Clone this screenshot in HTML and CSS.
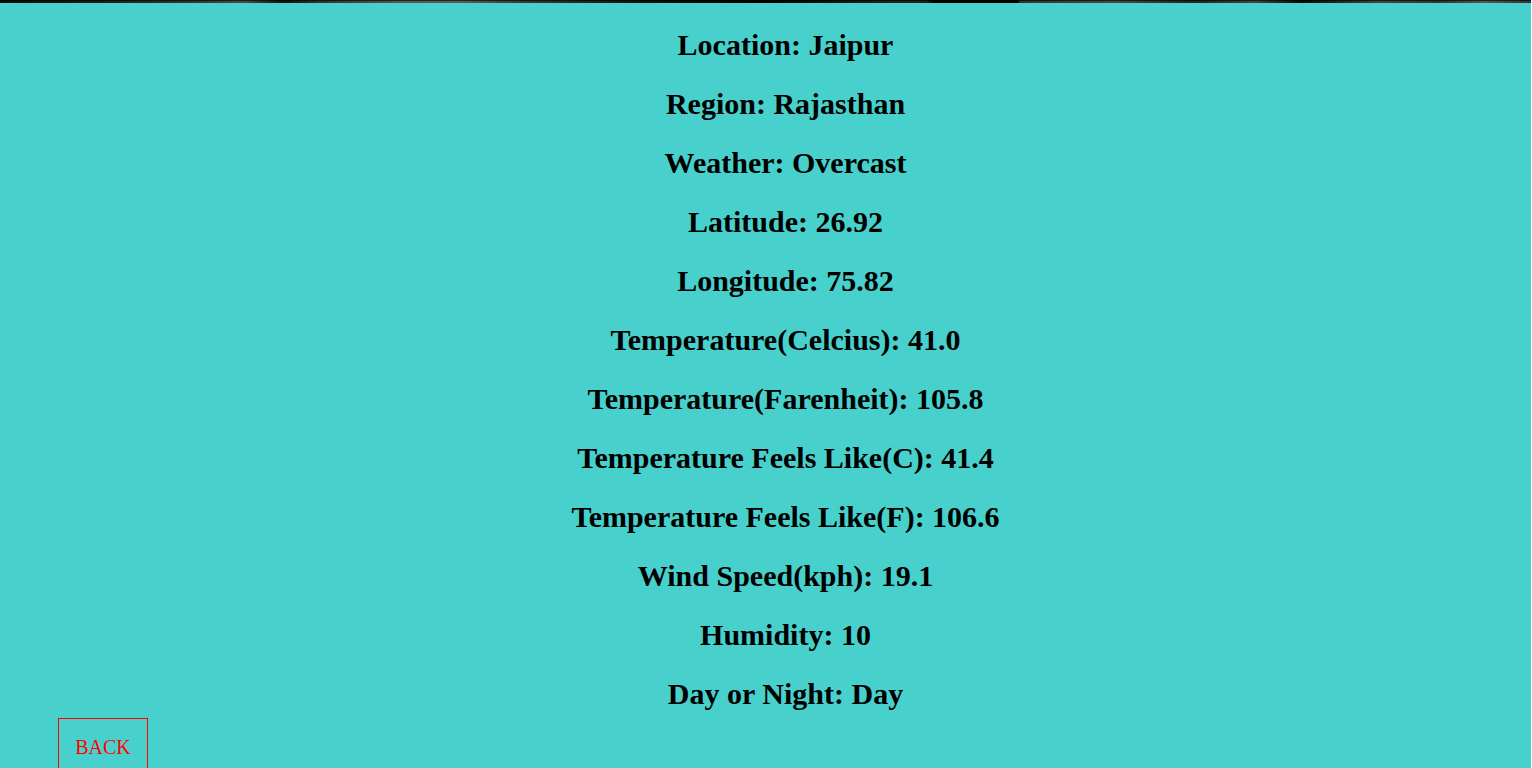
FILE: index.html
```html
<!DOCTYPE html>
<html lang="en">
<head>
<meta charset="utf-8">
<title>Weather</title>
<link rel="stylesheet" href="styles.css">
</head>
<body>
<div class="banner"></div>
<main class="report">
<h1 class="line">Location: Jaipur</h1>
<h1 class="line">Region: Rajasthan</h1>
<h1 class="line">Weather: Overcast</h1>
<h1 class="line">Latitude: 26.92</h1>
<h1 class="line">Longitude: 75.82</h1>
<h1 class="line">Temperature(Celcius): 41.0</h1>
<h1 class="line">Temperature(Farenheit): 105.8</h1>
<h1 class="line">Temperature Feels Like(C): 41.4</h1>
<h1 class="line">Temperature Feels Like(F): 106.6</h1>
<h1 class="line">Wind Speed(kph): 19.1</h1>
<h1 class="line">Humidity: 10</h1>
<h1 class="line">Day or Night: Day</h1>
</main>
<button class="back" type="button">BACK</button>
</body>
</html>
```
FILE: styles.css
```css
* { box-sizing: border-box; }
html { height: 100%; overflow: hidden; background: #fff; }
body {
  height: 100%;
  margin: 0 1px 0 0;
  overflow: hidden;
  background: #48d1cc;
  font-family: "Liberation Serif", "Times New Roman", serif;
  color: #000;
}
.banner {
  height: 3px;
  background:
    linear-gradient(to bottom, rgba(0, 0, 0, 0.6) 0 1px, transparent 1px),
    linear-gradient(to right, #0c0c0c 0%, #181818 5%, #303030 12%, #4a4a4a 16%, #101010 18.5%, #333 21%, #555 26%, #5a5a5a 30%, #333 35%, #111 42%, #000 50%, #222 58%, #222 60.5%, #000 61%, #000 66.5%, #333 66.6%, #484848 73%, #222 78%, #444 82%, #080808 85%, #444 90%, #333 94%, #555 97%, #333 100%);
}
.report {
  padding: 25px 0 0 40px;
  text-align: center;
}
.line {
  margin: 0 0 25px;
  font-size: 30px;
  line-height: 34px;
  font-weight: 700;
}
.back {
  display: block;
  width: 90px;
  height: 58px;
  margin: -18px 0 0 58px;
  padding: 0;
  background: transparent;
  border: 1px solid #f00;
  color: #f00;
  font-family: inherit;
  font-size: 20px;
}
```
